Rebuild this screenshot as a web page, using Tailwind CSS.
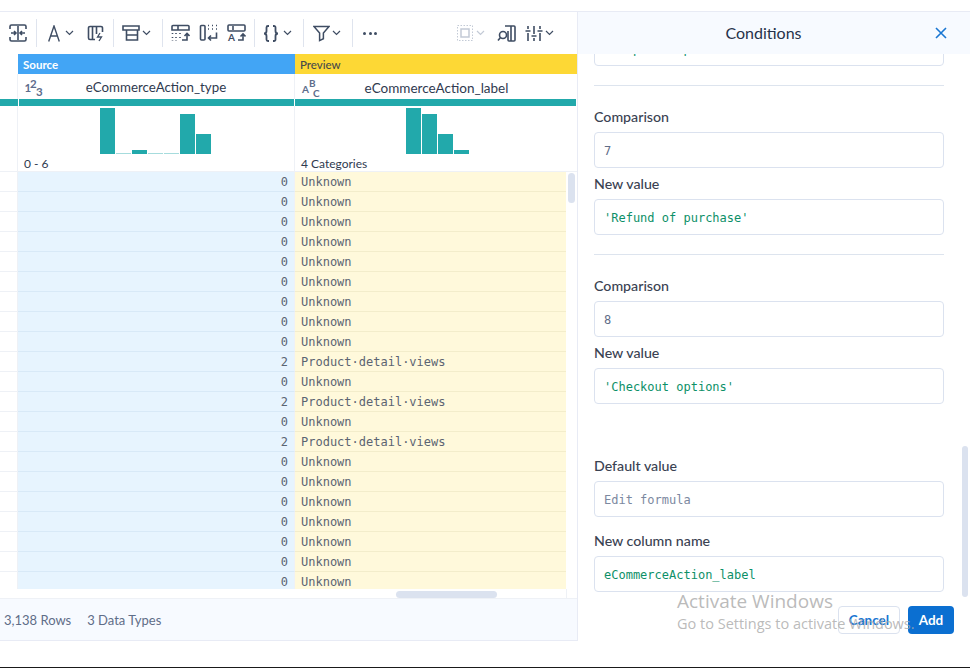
<!DOCTYPE html>
<html lang="en">
<head>
  <meta charset="UTF-8">
  <title>Conditions</title>
  <script src="https://cdn.jsdelivr.net/npm/@tailwindcss/browser@4"></script>
</head>
<body class="bg-white">
  <div class="relative w-[970px] h-[668px] overflow-hidden flex flex-col font-['Lato',sans-serif] text-[#2f3a4f]">
    <div class="h-[11px] shrink-0"></div>
    <div class="flex h-[630px] shrink-0 border-t border-[#e8ebf5]">

      <!-- left: data grid -->
      <div class="w-[578px] shrink-0 flex flex-col border-r border-[#e8ebf5]">
        <!-- toolbar -->
        <div class="h-[42px] shrink-0 flex items-center text-[#3f4d63]">
          <svg class="ml-[9px] w-[18px] h-[18px]" viewBox="0 0 18 18" fill="none" stroke="currentColor" stroke-width="1.600"><path d="M1 5V2.500A1.500 1.500 0 0 1 2.500 1H15.500A1.500 1.500 0 0 1 17 2.500V5M1 13v2.500A1.500 1.500 0 0 0 2.500 17H15.500A1.500 1.500 0 0 0 17 15.500V13M9 2v14M2 9h5M5 7l2 2-2 2M16 9h-5M13 7l-2 2 2 2"/></svg>
          <div class="ml-[9px] w-px h-[28px] bg-[#dfe4ee]"></div>
          <svg class="ml-[11px] w-[12px] h-[17px]" viewBox="0 0 12 17" fill="none" stroke="currentColor" stroke-width="1.400"><path d="M.700 16.500 6 1l5.300 15.500M2.500 11h7"/></svg>
          <svg class="ml-[5px] w-[9px] h-[6px]" viewBox="0 0 9 6" fill="none" stroke="currentColor" stroke-width="1.200"><path d="m1 1 3.500 3.500L8 1"/></svg>
          <svg class="ml-[13px] w-[17px] h-[17px]" viewBox="0 0 17 17" fill="none" stroke="currentColor" stroke-width="1.600"><path d="M8 14.500H3A1.500 1.500 0 0 1 1.500 13V3A1.500 1.500 0 0 1 3 1.500h11A1.500 1.500 0 0 1 15.500 3v4M5.500 2v12M9.500 2v7"/><path d="m13 8-2.500 4h4L12 16" stroke-width="1.300"/></svg>
          <div class="ml-[9px] w-px h-[28px] bg-[#dfe4ee]"></div>
          <svg class="ml-[8px] w-[18px] h-[16px]" viewBox="0 0 18 16" fill="none" stroke="currentColor" stroke-width="1.600"><path d="M1 1h16v4H1zM4.500 5v10h11V5M4.500 10h11"/></svg>
          <svg class="ml-[2px] w-[9px] h-[6px]" viewBox="0 0 9 6" fill="none" stroke="currentColor" stroke-width="1.200"><path d="m1 1 3.500 3.500L8 1"/></svg>
          <div class="ml-[11px] w-px h-[28px] bg-[#dfe4ee]"></div>
          <svg class="ml-[8px] w-[19px] h-[18px]" viewBox="0 0 19 18" fill="none" stroke="currentColor" stroke-width="1.600"><path d="M1 6V2.500A1 1 0 0 1 2 1.500h15a1 1 0 0 1 1 1V6zM7 2v4"/><path d="M1.500 9v1M1.500 13v1M1.500 16.500v.5M5 9v1M5 13v1M5 16.500v.5M9 9v1M9 13v1" stroke-dasharray="1.500 1"/><path d="M11 16h5V9.500M13.500 12 16 9.500l2.500 2.500"/></svg>
          <svg class="ml-[9px] w-[19px] h-[18px]" viewBox="0 0 19 18" fill="none" stroke="currentColor" stroke-width="1.600"><path d="M2.500 1.500H5a1 1 0 0 1 1 1V15a1 1 0 0 1-1 1H2.500a1 1 0 0 1-1-1V2.500a1 1 0 0 1 1-1z"/><path d="M9 1.500h1M13 1.500h1M17 1.500h1M9 5h1M13 5h1M17 5h1"/><path d="M17.500 8.500V14H9.500M12 11.500 9.500 14l2.500 2.500"/></svg>
          <svg class="ml-[9px] w-[19px] h-[18px]" viewBox="0 0 19 18" fill="none" stroke="currentColor" stroke-width="1.600"><rect x="1" y="1" width="17" height="6" rx="1"/><path d="M6 2v4"/><path d="M11 16h5v-6M13.500 12.500 16 10l2.500 2.500"/><text x="1" y="17" font-family="Lato, sans-serif" font-size="10" font-weight="700" fill="currentColor" stroke="none">A</text></svg>
          <div class="ml-[8px] w-px h-[28px] bg-[#dfe4ee]"></div>
          <svg class="ml-[8px] w-[16px] h-[17px]" viewBox="0 0 16 17" fill="none" stroke="currentColor" stroke-width="1.800"><path d="M6 1H5A1.500 1.500 0 0 0 3.500 2.500V6A2.500 2.500 0 0 1 1 8.500 2.500 2.500 0 0 1 3.500 11v3.500A1.500 1.500 0 0 0 5 16h1M10 1h1a1.500 1.500 0 0 1 1.500 1.500V6A2.500 2.500 0 0 0 15 8.500 2.500 2.500 0 0 0 12.500 11v3.500A1.500 1.500 0 0 1 11 16h-1"/></svg>
          <svg class="ml-[4px] w-[9px] h-[6px]" viewBox="0 0 9 6" fill="none" stroke="currentColor" stroke-width="1.200"><path d="m1 1 3.500 3.500L8 1"/></svg>
          <div class="ml-[11px] w-px h-[28px] bg-[#dfe4ee]"></div>
          <svg class="ml-[9px] w-[17px] h-[17px]" viewBox="0 0 18 17" fill="none" stroke="currentColor" stroke-width="1.600"><path d="M1 1h16l-6 7v6l-4 2V8z"/></svg>
          <svg class="ml-[2px] w-[9px] h-[6px]" viewBox="0 0 9 6" fill="none" stroke="currentColor" stroke-width="1.200"><path d="m1 1 3.500 3.500L8 1"/></svg>
          <div class="ml-[11px] w-px h-[28px] bg-[#dfe4ee]"></div>
          <div class="ml-[10px] flex gap-[2.500px]"><span class="w-[3px] h-[3px] rounded-full bg-current"></span><span class="w-[3px] h-[3px] rounded-full bg-current"></span><span class="w-[3px] h-[3px] rounded-full bg-current"></span></div>
          <svg class="ml-[80px] w-[16px] h-[16px] text-[#c3cad6]" viewBox="0 0 16 16" fill="none" stroke="currentColor"><path d="M.500.500h15v15H.500z" stroke-dasharray="1.500 1.500"/><rect x="4" y="4" width="8" height="8" stroke-width="1.500"/></svg>
          <svg class="ml-[3px] w-[9px] h-[6px] text-[#c3cad6]" viewBox="0 0 9 6" fill="none" stroke="currentColor" stroke-width="1.200"><path d="m1 1 3.500 3.500L8 1"/></svg>
          <svg class="ml-[12px] w-[19px] h-[17px]" viewBox="0 0 19 17" fill="none" stroke="currentColor" stroke-width="1.600"><path d="M8 1h9a1 1 0 0 1 1 1v13a1 1 0 0 1-1 1h-5a1 1 0 0 1-1-1V6M14 1v15"/><circle cx="6" cy="10" r="3.500"/><path d="m3.500 12.500-2.500 3"/></svg>
          <svg class="ml-[9px] w-[18px] h-[17px]" viewBox="0 0 18 17" fill="none" stroke="currentColor" stroke-width="1.600"><path d="M3 1v3M3 8v8M9 1v8M9 13v3M15 1v3M15 8v8M.500 6h5M6.500 11h5M12.500 6h5"/></svg>
          <svg class="ml-[2px] w-[9px] h-[6px]" viewBox="0 0 9 6" fill="none" stroke="currentColor" stroke-width="1.200"><path d="m1 1 3.500 3.500L8 1"/></svg>
        </div>

        <!-- grid -->
        <div class="grid grid-cols-[18px_277px_282px] shrink-0 h-[535px] overflow-hidden">
          <div class="flex flex-col">
            <div class="h-[20px]"></div>
            <div class="h-[25px] border-r border-[#eef1f6]"></div>
            <div class="h-[7px] bg-[#22a9ab]"></div>
            <div class="h-[66px] border-r border-[#eef1f6] border-b"></div>
            <div id="indexCol"></div>
          </div>
          <div class="flex flex-col">
            <div class="h-[20px] bg-[#42a5f5] text-white text-[11.500px] font-bold leading-[21px] pl-[5px]">Source</div>
            <div class="h-[25px] flex items-center relative border-r border-[#eef1f6] pt-[3px]">
              <svg class="absolute left-[6px] top-[3px] w-[20px] h-[20px] text-[#5d6d8c]" viewBox="0 0 20 20" fill="currentColor" font-family="Lato, sans-serif" font-weight="700" font-size="11.500"><text x="0.500" y="15">1</text><text x="6" y="11">2</text><text x="12" y="19">3</text></svg>
              <span class="w-full text-center text-[13.300px]">eCommerceAction_type</span>
            </div>
            <div class="h-[7px] bg-[#22a9ab] border-x border-white"></div>
            <div class="h-[66px] border-r border-[#eef1f6] border-b flex flex-col">
              <div class="h-[48px] pt-[2px] pr-[2px] flex items-end justify-center gap-px">
                <div class="w-[15px] h-[46px] bg-[#22a9ab]"></div>
                <div class="w-[15px] h-px bg-[#a6dcdd]"></div>
                <div class="w-[15px] h-[4px] bg-[#22a9ab]"></div>
                <div class="w-[15px] h-px bg-[#a6dcdd]"></div>
                <div class="w-[15px] h-px bg-[#a6dcdd]"></div>
                <div class="w-[15px] h-[40px] bg-[#22a9ab]"></div>
                <div class="w-[15px] h-[20px] bg-[#22a9ab]"></div>
              </div>
              <div class="pl-[6px] text-[12px] leading-[20px]">0 - 6</div>
            </div>
            <div id="sourceCol"></div>
          </div>
          <div class="flex flex-col">
            <div class="h-[20px] bg-[#fdd835] text-[#47494a] text-[11.500px] font-medium leading-[21px] pl-[5px]">Preview</div>
            <div class="h-[25px] flex items-center relative pt-[3px]">
              <svg class="absolute left-[6px] top-[3px] w-[20px] h-[20px] text-[#5d6d8c]" viewBox="0 0 20 20" fill="currentColor" font-family="Lato, sans-serif" font-weight="700" font-size="10"><text x="1" y="15.500">A</text><text x="8" y="9.500">B</text><text x="12" y="19.500">C</text></svg>
              <span class="w-full text-center pl-px text-[13.500px]">eCommerceAction_label</span>
            </div>
            <div class="h-[7px] bg-[#22a9ab] mr-px"></div>
            <div class="h-[66px] border-b border-[#eef1f6] flex flex-col">
              <div class="h-[48px] pt-[2px] pl-[2px] flex items-end justify-center gap-px">
                <div class="w-[15px] h-[46px] bg-[#22a9ab]"></div>
                <div class="w-[15px] h-[40px] bg-[#22a9ab]"></div>
                <div class="w-[15px] h-[20px] bg-[#22a9ab]"></div>
                <div class="w-[15px] h-[4px] bg-[#22a9ab]"></div>
              </div>
              <div class="pl-[6px] text-[12px] leading-[20px]">4 Categories</div>
            </div>
            <div class="relative">
              <div id="previewCol"></div>
              <div class="absolute left-[273px] top-px w-[7px] h-[30px] rounded bg-[#dbe2ef]"></div>
            </div>
          </div>
        </div>

        <!-- horizontal scrollbar strip -->
        <div class="h-[10px] shrink-0 relative border-b border-[#eef1f6]">
          <div class="absolute left-[396px] top-[2px] w-[101px] h-[7px] rounded bg-[#dbe2ef]"></div>
          <div class="absolute left-[566px] top-0 h-full w-px bg-[#eef1f6]"></div>
        </div>

        <!-- footer -->
        <div class="flex-1 bg-[#f7faff] border-b border-[#e8ebf5] flex items-center gap-[16px] pl-[4px] pt-[3px] text-[13px] text-[#5f6d88]">
          <span>3,138 Rows</span>
          <span>3 Data Types</span>
        </div>
      </div>

      <!-- right: conditions panel -->
      <div class="flex-1 flex flex-col relative">
        <div class="h-[42px] shrink-0 bg-[#f7faff] flex items-center justify-center pr-[21px] text-[16px] text-[#26324a] relative z-10">
          Conditions
          <svg class="absolute right-[23px] top-[15px] w-[12px] h-[12px] text-[#1976d2]" viewBox="0 0 12 12" fill="none" stroke="currentColor" stroke-width="1.600"><path d="m1 1 10 10M11 1 1 11"/></svg>
        </div>
        <div class="h-[544px] shrink-0 overflow-hidden px-[16px]">
          <div class="mt-[-24px] w-[350px] text-[14.200px]">
            <div class="h-[36px] rounded border border-[#dbe2ef] flex items-center pl-[9px] pt-[2px] font-['DejaVu_Sans_Mono',monospace] text-[12px] text-[#0d9068]">'Completed purchase'</div>

            <div class="mt-[19px] border-t border-[#dde4ee]"></div>

            <div class="mt-[21px] h-[20px] leading-[20px] font-medium text-[#3a4252]">Comparison</div>
            <div class="mt-[5px] h-[36px] rounded border border-[#dbe2ef] flex items-center pl-[9px] pt-[2px] font-['DejaVu_Sans_Mono',monospace] text-[12px] text-[#5f6d88]">7</div>
            <div class="mt-[6px] h-[20px] leading-[20px] font-medium text-[#3a4252]">New value</div>
            <div class="mt-[5px] h-[36px] rounded border border-[#dbe2ef] flex items-center pl-[9px] pt-[2px] font-['DejaVu_Sans_Mono',monospace] text-[12px] text-[#0d9068]">'Refund of purchase'</div>

            <div class="mt-[19px] border-t border-[#dde4ee]"></div>

            <div class="mt-[21px] h-[20px] leading-[20px] font-medium text-[#3a4252]">Comparison</div>
            <div class="mt-[5px] h-[36px] rounded border border-[#dbe2ef] flex items-center pl-[9px] pt-[2px] font-['DejaVu_Sans_Mono',monospace] text-[12px] text-[#5f6d88]">8</div>
            <div class="mt-[6px] h-[20px] leading-[20px] font-medium text-[#3a4252]">New value</div>
            <div class="mt-[5px] h-[36px] rounded border border-[#dbe2ef] flex items-center pl-[9px] pt-[2px] font-['DejaVu_Sans_Mono',monospace] text-[12px] text-[#0d9068]">'Checkout options'</div>

            <div class="mt-[52px] h-[20px] leading-[20px] font-medium text-[#3a4252]">Default value</div>
            <div class="mt-[5px] h-[36px] rounded border border-[#dbe2ef] flex items-center pl-[9px] pt-[2px] font-['DejaVu_Sans_Mono',monospace] text-[12px] text-[#7c88a0]">Edit formula</div>
            <div class="mt-[14px] h-[20px] leading-[20px] font-medium text-[#3a4252]">New column name</div>
            <div class="mt-[5px] h-[36px] rounded border border-[#dbe2ef] flex items-center pl-[9px] pt-[2px] font-['DejaVu_Sans_Mono',monospace] text-[12px] text-[#0d9068]">eCommerceAction_label</div>
          </div>
        </div>
        <div class="absolute left-[384px] top-[434px] w-[6px] h-[151px] rounded bg-[#dbe2ef]"></div>
        <div class="flex justify-end gap-[8px] pr-[16px] pt-[8px]">
          <button class="w-[62px] h-[28px] rounded border border-[#dbe2ef] text-[13.500px] font-bold text-[#1976d2]">Cancel</button>
          <button class="w-[46px] h-[28px] rounded bg-[#0b6fd1] text-[13.500px] font-bold text-white">Add</button>
        </div>
      </div>
    </div>
    <div class="flex-1"></div>
    <div class="h-px bg-[#1a1a1a]"></div>

    <!-- windows watermark -->
    <div class="absolute left-[677px] top-[589px] pointer-events-none font-['Open_Sans',sans-serif] text-[#a9a9a9]/80">
      <div class="text-[19px] leading-[25px]">Activate Windows</div>
      <div class="text-[14.500px] leading-[20px] whitespace-nowrap">Go to Settings to activate Windows.</div>
    </div>
  </div>

  <script>
    // row values for the source column
    const values = [0,0,0,0,0,0,0,0,0,2,0,2,0,2,0,0,0,0,0,0,0];
    const labels = { 0: 'Unknown', 2: 'Product·detail·views' };
    indexCol.innerHTML = values.map(() => '<div class="h-[20px] border-b border-r border-[#eef1f6]"></div>').join('');
    sourceCol.innerHTML = values.map(v => `<div class="h-[20px] bg-[#e7f4fe] border-b border-r border-b-[#d8e9f7] border-r-[#eef1f6] text-right pr-[6px] font-['DejaVu_Sans_Mono',monospace] text-[12px] leading-[20px] text-[#5b6472]">${v}</div>`).join('');
    previewCol.innerHTML = values.map(v => `<div class="h-[20px] w-[271px] bg-[#fff9db] border-b border-[#f3edcb] pl-[6px] font-['DejaVu_Sans_Mono',monospace] text-[12px] leading-[20px] text-[#5b6472]">${labels[v]}</div>`).join('');
  </script>
</body>
</html>
